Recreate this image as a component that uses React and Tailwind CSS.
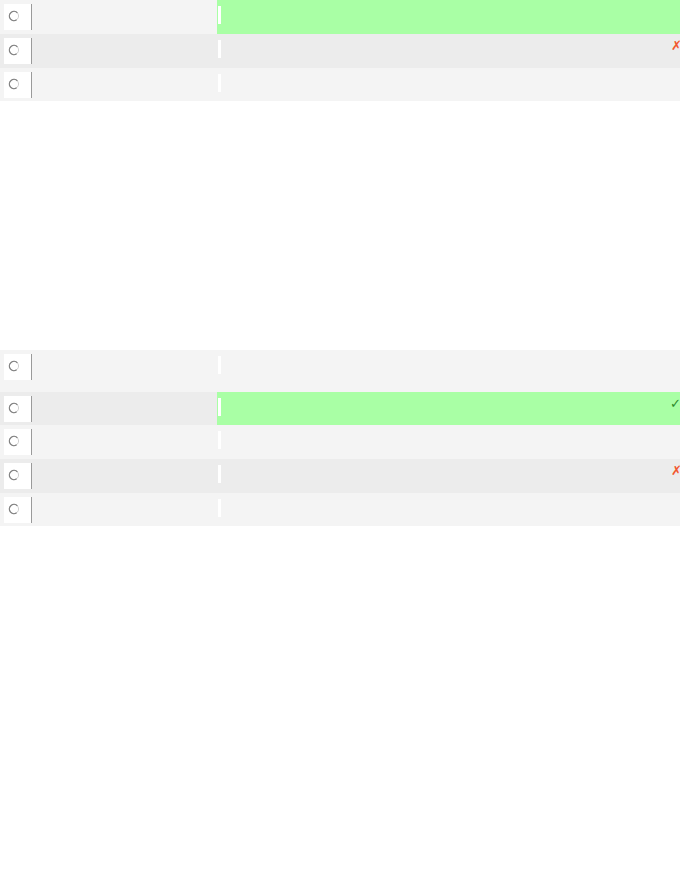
import React from "react";

function Radio() {
  return (
    <svg width="12" height="12" viewBox="0 0 12 12" className="block">
      <circle cx="6" cy="6" r="4.6" fill="none" stroke="#d0d0d0" strokeWidth="1" />
      <path d="M9.4 2.9 A4.6 4.6 0 1 0 8.6 9.8" fill="none" stroke="#808080" strokeWidth="1.3" />
    </svg>
  );
}

function Row({ h = "h-[34px]", alt, green, mark }) {
  const leftBg = alt ? "bg-[#ececec]" : "bg-[#f4f4f4]";
  const rightBg = green ? "bg-[#a9ffa5]" : alt ? "bg-[#ececec]" : "bg-[#f4f4f4]";
  return (
    <div className={`flex ${h}`}>
      <div className={`w-[217px] shrink-0 ${leftBg} pt-[4px] pl-[4px]`}>
        <div className="w-[28px] h-[26px] bg-white border-r border-[#9a9a9a] flex items-start pt-[6px] pl-[4px]">
          <Radio />
        </div>
      </div>
      <div className={`flex-1 ${rightBg} relative flex items-start`}>
        <div className="ml-[1px] mt-[6px] w-[3px] h-[18px] bg-white" />
        {mark === "x" && (
          <span className="absolute right-[-2px] top-[5px] text-[13px] leading-none text-[#f2572f] font-['DejaVu_Sans',sans-serif]">✗</span>
        )}
        {mark === "v" && (
          <span className="absolute right-[-1px] top-[5px] text-[13px] leading-none text-[#2d8a2d] font-['DejaVu_Sans',sans-serif]">✓</span>
        )}
      </div>
    </div>
  );
}

export default function App() {
  return (
    <div className="w-[680px] h-[870px] bg-white overflow-hidden font-['Liberation_Sans',sans-serif]">
      <div className="flex flex-col">
        <Row green />
        <Row alt mark="x" />
        <Row h="h-[33px]" />
      </div>
      <div className="flex flex-col mt-[249px]">
        <Row h="h-[42px]" />
        <Row h="h-[33px]" alt green mark="v" />
        <Row />
        <Row alt mark="x" />
        <Row h="h-[33px]" />
      </div>
    </div>
  );
}
